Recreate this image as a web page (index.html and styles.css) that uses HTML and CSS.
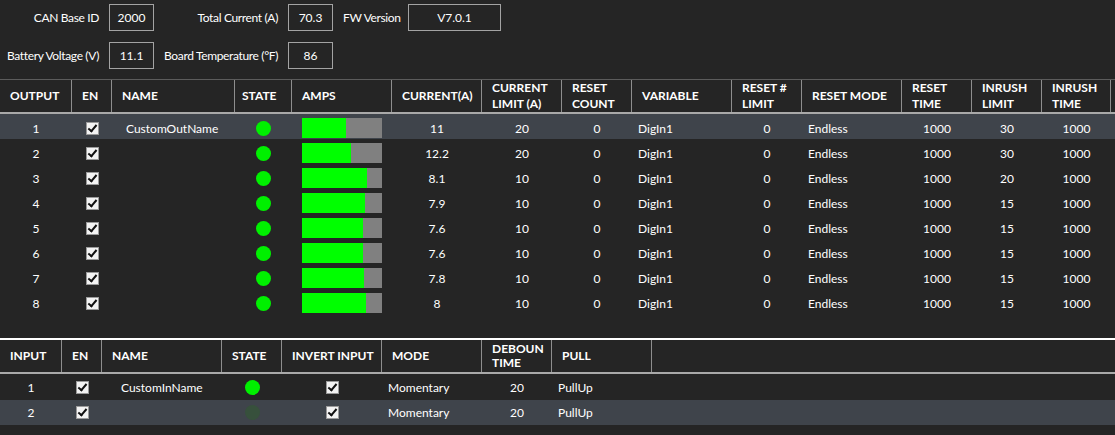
FILE: index.html
```html
<!DOCTYPE html>
<html>
<head>
<meta charset="utf-8">
<link rel="stylesheet" href="styles.css">
</head>
<body>
<div class="info">
  <div class="lbl">CAN Base ID</div><div class="box">2000</div>
  <div class="lbl">Total Current (A)</div><div class="box">70.3</div>
  <div class="lbl">FW Version</div><div class="box">V7.0.1</div>
  <div class="lbl">Battery Voltage (V)</div><div class="box">11.1</div>
  <div class="lbl">Board Temperature (°F)</div><div class="box">86</div>
</div>

<div class="otable">
  <div class="row head">
    <div class="h">OUTPUT</div><div class="h">EN</div><div class="h">NAME</div><div class="h hs">STATE</div><div class="h">AMPS</div>
    <div class="h">CURRENT(A)</div><div class="h">CURRENT<br>LIMIT (A)</div><div class="h">RESET<br>COUNT</div><div class="h">VARIABLE</div>
    <div class="h">RESET #<br>LIMIT</div><div class="h">RESET MODE</div><div class="h">RESET<br>TIME</div><div class="h">INRUSH<br>LIMIT</div><div class="h">INRUSH<br>TIME</div><div class="h"></div>
  </div>
  <div class="row sel">
    <div class="c">1</div><div class="c"><span class="cb"></span></div><div class="l name">CustomOutName</div><div class="c"><span class="dot"></span></div>
    <div class="bcell"><div class="bar"><div class="fill" style="width:55%"></div></div></div>
    <div class="c">11</div><div class="c">20</div><div class="c">0</div><div class="l var">DigIn1</div><div class="c">0</div><div class="l var">Endless</div><div class="c">1000</div><div class="c">30</div><div class="c">1000</div><div></div>
  </div>
  <div class="row">
    <div class="c">2</div><div class="c"><span class="cb"></span></div><div class="l name"></div><div class="c"><span class="dot"></span></div>
    <div class="bcell"><div class="bar"><div class="fill" style="width:61%"></div></div></div>
    <div class="c">12.2</div><div class="c">20</div><div class="c">0</div><div class="l var">DigIn1</div><div class="c">0</div><div class="l var">Endless</div><div class="c">1000</div><div class="c">30</div><div class="c">1000</div><div></div>
  </div>
  <div class="row">
    <div class="c">3</div><div class="c"><span class="cb"></span></div><div class="l name"></div><div class="c"><span class="dot"></span></div>
    <div class="bcell"><div class="bar"><div class="fill" style="width:81%"></div></div></div>
    <div class="c">8.1</div><div class="c">10</div><div class="c">0</div><div class="l var">DigIn1</div><div class="c">0</div><div class="l var">Endless</div><div class="c">1000</div><div class="c">20</div><div class="c">1000</div><div></div>
  </div>
  <div class="row">
    <div class="c">4</div><div class="c"><span class="cb"></span></div><div class="l name"></div><div class="c"><span class="dot"></span></div>
    <div class="bcell"><div class="bar"><div class="fill" style="width:79%"></div></div></div>
    <div class="c">7.9</div><div class="c">10</div><div class="c">0</div><div class="l var">DigIn1</div><div class="c">0</div><div class="l var">Endless</div><div class="c">1000</div><div class="c">15</div><div class="c">1000</div><div></div>
  </div>
  <div class="row">
    <div class="c">5</div><div class="c"><span class="cb"></span></div><div class="l name"></div><div class="c"><span class="dot"></span></div>
    <div class="bcell"><div class="bar"><div class="fill" style="width:76%"></div></div></div>
    <div class="c">7.6</div><div class="c">10</div><div class="c">0</div><div class="l var">DigIn1</div><div class="c">0</div><div class="l var">Endless</div><div class="c">1000</div><div class="c">15</div><div class="c">1000</div><div></div>
  </div>
  <div class="row">
    <div class="c">6</div><div class="c"><span class="cb"></span></div><div class="l name"></div><div class="c"><span class="dot"></span></div>
    <div class="bcell"><div class="bar"><div class="fill" style="width:76%"></div></div></div>
    <div class="c">7.6</div><div class="c">10</div><div class="c">0</div><div class="l var">DigIn1</div><div class="c">0</div><div class="l var">Endless</div><div class="c">1000</div><div class="c">15</div><div class="c">1000</div><div></div>
  </div>
  <div class="row">
    <div class="c">7</div><div class="c"><span class="cb"></span></div><div class="l name"></div><div class="c"><span class="dot"></span></div>
    <div class="bcell"><div class="bar"><div class="fill" style="width:78%"></div></div></div>
    <div class="c">7.8</div><div class="c">10</div><div class="c">0</div><div class="l var">DigIn1</div><div class="c">0</div><div class="l var">Endless</div><div class="c">1000</div><div class="c">15</div><div class="c">1000</div><div></div>
  </div>
  <div class="row">
    <div class="c">8</div><div class="c"><span class="cb"></span></div><div class="l name"></div><div class="c"><span class="dot"></span></div>
    <div class="bcell"><div class="bar"><div class="fill" style="width:80%"></div></div></div>
    <div class="c">8</div><div class="c">10</div><div class="c">0</div><div class="l var">DigIn1</div><div class="c">0</div><div class="l var">Endless</div><div class="c">1000</div><div class="c">15</div><div class="c">1000</div><div></div>
  </div>
</div>

<div class="itable">
  <div class="row head">
    <div class="h">INPUT</div><div class="h">EN</div><div class="h">NAME</div><div class="h">STATE</div><div class="h">INVERT INPUT</div>
    <div class="h">MODE</div><div class="h">DEBOUN<br>TIME</div><div class="h">PULL</div><div class="h last"></div>
  </div>
  <div class="row">
    <div class="c">1</div><div class="c"><span class="cb"></span></div><div class="l iname">CustomInName</div><div class="c"><span class="dot"></span></div>
    <div class="c"><span class="cb"></span></div><div class="l var">Momentary</div><div class="c">20</div><div class="l var">PullUp</div><div></div>
  </div>
  <div class="row sel">
    <div class="c">2</div><div class="c"><span class="cb"></span></div><div class="l iname"></div><div class="c"><span class="dot off"></span></div>
    <div class="c"><span class="cb"></span></div><div class="l var">Momentary</div><div class="c">20</div><div class="l var">PullUp</div><div></div>
  </div>
</div>
</body>
</html>
```

FILE: styles.css
```css
html, body {
  margin: 0;
  padding: 0;
}
body {
  background: #252525;
  color: #ffffff;
  font-family: Lato, "Open Sans", sans-serif;
  font-size: 12px;
  width: 1115px;
  height: 435px;
  overflow: hidden;
}

/* top info grid */
.info {
  display: grid;
  grid-template-columns: 99px 45px 114px 45px 55px 93px;
  grid-auto-rows: 27px;
  column-gap: 10px;
  row-gap: 11px;
  padding-top: 4px;
  align-items: center;
}
.lbl {
  text-align: right;
  white-space: nowrap;
  letter-spacing: -0.35px;
}
.box {
  box-sizing: border-box;
  height: 27px;
  border: 1px solid #a3a3a3;
  display: flex;
  align-items: center;
  justify-content: center;
}

/* shared row layout */
.row {
  display: grid;
}
.otable {
  margin-top: 10px;
}
.otable .row {
  grid-template-columns: 72px 40px 123px 57px 100px 90px 80px 70px 100px 70px 100px 70px 70px 69px 4px;
  height: 25px;
}
.itable {
  margin-top: 24px;
}
.itable .row {
  grid-template-columns: 62px 40px 120px 60px 100px 100px 70px 100px 1fr;
  height: 26px;
}
.itable .row.sel {
  height: 25px;
}

.row.head {
  height: 32px;
  font-weight: bold;
  border-bottom: 2px solid #a9a9a9;
}
.otable .row.head {
  border-top: 1px solid #5c5c5c;
  line-height: 16px;
}
.itable .row.head {
  border-top: 2px solid #ffffff;
  line-height: 14.5px;
}
.h {
  box-sizing: border-box;
  border-right: 1px solid #8e8e8e;
  padding-left: 10px;
  display: flex;
  align-items: center;
  white-space: nowrap;
}
.h.hs {
  padding-left: 7px;
}
.h.last {
  border-right: none;
}

.row.sel {
  background: #3f444b;
}
.otable .row:not(.head) > div {
  padding-top: 3px;
  box-sizing: border-box;
}
.c {
  display: flex;
  align-items: center;
  justify-content: center;
}
.l {
  display: flex;
  align-items: center;
  white-space: nowrap;
}
.name {
  padding-left: 14px;
}
.iname {
  padding-left: 19px;
}
.var {
  padding-left: 6px;
}

/* checkbox */
.cb {
  display: inline-block;
  width: 13px;
  height: 13px;
  box-sizing: border-box;
  background: #f3f3f3;
  border: 1px solid #9a9a9a;
  position: relative;
}
.cb::after {
  content: "";
  position: absolute;
  left: 3.5px;
  top: 0px;
  width: 3px;
  height: 7px;
  border-right: 2px solid #111;
  border-bottom: 2px solid #111;
  transform: rotate(40deg);
}

/* state dot */
.dot {
  display: inline-block;
  width: 15px;
  height: 15px;
  border-radius: 50%;
  background: #00f000;
}
.dot.off {
  background: #37503c;
}

/* amps bar */
.bcell {
  display: flex;
  align-items: center;
  padding-left: 10px;
}
.bar {
  width: 80px;
  height: 20px;
  background: #808080;
  display: flex;
}
.fill {
  height: 100%;
  background: #00ff00;
}
```
